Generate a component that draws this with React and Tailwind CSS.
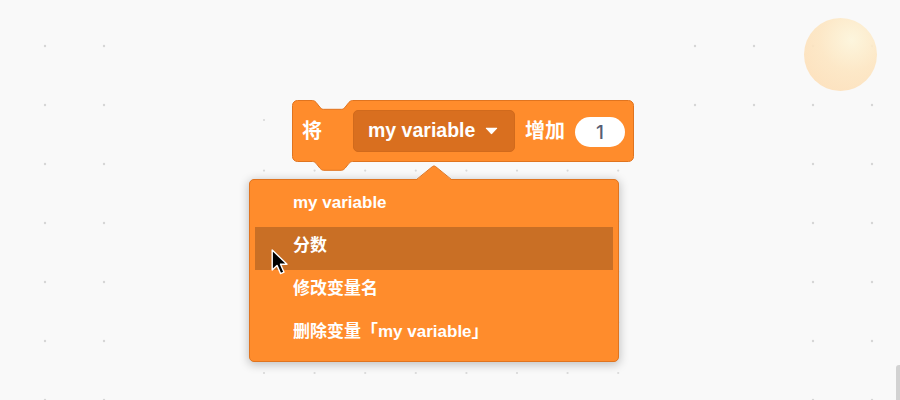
import React from 'react';

const FONT = "font-['Liberation_Sans','Noto_Sans_CJK_SC',sans-serif]";

// dot grids of the workspace
const bigCols = [45, 104, 695, 754, 813, 872];
const bigRows = [46, 105, 164, 223, 282, 341, 400];
const fineCols = [264, 314.6, 365.2, 415.8, 466.4, 517, 567.6, 618.2];
const fineRows = [120, 170.6, 221.2, 271.8, 322.4, 373];

const Grid = () => {
  const dots = [];
  bigCols.forEach((x) =>
    bigRows.forEach((y) => {
      if ((x === 695 || x === 754) && y > 105) return;
      dots.push(<circle key={`b${x}-${y}`} cx={x} cy={y} r="1.2" fill="#d6d6d6" />);
    })
  );
  fineCols.forEach((x) =>
    fineRows.forEach((y) => {
      dots.push(<circle key={`f${x}-${y}`} cx={x} cy={y} r="1.1" fill="#d9d9d9" />);
    })
  );
  return (
    <svg className="absolute inset-0" width="900" height="400">
      {dots}
    </svg>
  );
};

const notch = 'c1.5,0 2.5,0.8 3.5,1.8 l4,5 c1,1 2,2 3.5,2 h18 c1.5,0 2.5,-1 3.5,-2 l4,-5 c1,-1 2,-1.8 3.5,-1.8';
const tab = 'c-1.5,0 -2.5,0.8 -3.5,1.8 l-4,5 c-1,1 -2,2 -3.5,2 h-18 c-1.5,0 -2.5,-1 -3.5,-2 l-4,-5 c-1,-1 -2,-1.8 -3.5,-1.8';

const Block = () => (
  <div className="absolute left-[292px] top-[100px] w-[343px] h-[62px]">
    <svg className="absolute left-0 top-0" width="344" height="74">
      <path
        d={`M0.5,5.5 a5,5 0 0 1 5,-5 H20.5 ${notch} H336.5 a5,5 0 0 1 5,5 V56.5 a5,5 0 0 1 -5,5 H60.5 ${tab} H5.5 a5,5 0 0 1 -5,-5 Z`}
        fill="#FF8C2C"
        stroke="#E0741F"
        strokeWidth="1"
      />
    </svg>
    <div className={`relative flex items-center h-[62px] pl-[10px] text-white font-bold ${FONT}`}>
      <span className="text-[20px] leading-none w-[20px]">将</span>
      <div className="ml-[31px] w-[162px] h-[42px] rounded-[5px] bg-[#D96F1F] border border-[#D16A1C] flex items-center pl-[14px]">
        <span className="text-[19.5px] leading-none">my variable</span>
        <svg className="ml-[10px]" width="13" height="8" viewBox="0 0 13 8">
          <path d="M1.2,0.8 H11.8 Q12.6,0.8 12.1,1.5 L7.2,6.8 Q6.5,7.5 5.8,6.8 L0.9,1.5 Q0.4,0.8 1.2,0.8 Z" fill="#fff" />
        </svg>
      </div>
      <span className="ml-[10px] text-[20px] leading-none">增加</span>
      <div className="ml-[10px] w-[50px] h-[30px] mt-[2px] rounded-full bg-white flex items-center justify-center">
        <span className="text-[19px] font-medium font-['Inter',sans-serif] text-[#575E75] leading-none">1</span>
      </div>
    </div>
  </div>
);

const items = ['my variable', '分数', '修改变量名', '删除变量「my variable」'];

const Menu = () => (
  <div className="absolute left-[249px] top-[179px] w-[370px] h-[183px]">
    <div className="absolute inset-0 rounded-[5px] bg-[#FF8C2C] border border-[#E0741F] shadow-[0_2px_10px_1px_rgba(0,0,0,0.22)]" />
    <svg className="absolute left-[167px] top-[-14px]" width="36" height="16">
      <path d="M0.5,15 L16.5,1.5 Q18,0.3 19.5,1.5 L35.5,15 Z" fill="#FF8C2C" />
      <path d="M0.5,14.5 L16.5,1.5 Q18,0.3 19.5,1.5 L35.5,14.5" fill="none" stroke="#E0741F" strokeWidth="1" />
    </svg>
    <div className={`relative flex flex-col pt-[5px] px-[6px] text-white font-bold text-[17px] ${FONT}`}>
      {items.map((t, i) => (
        <div
          key={t}
          className={`h-[43px] flex items-center pl-[38px] pb-[6px] ${i === 1 ? 'bg-[#C96F25]' : ''}`}
        >
          <span className="leading-none whitespace-nowrap">{t}</span>
        </div>
      ))}
    </div>
  </div>
);

const Cursor = () => (
  <svg className="absolute left-[271px] top-[249px]" width="18" height="28" viewBox="0 0 18 28">
    <path
      d="M1.2,1 L1.2,21 L6,16.4 L9.6,24.6 L13,23.2 L9.5,15.2 L16,15.2 Z"
      fill="#000"
      stroke="#fff"
      strokeWidth="1.4"
      strokeLinejoin="round"
    />
  </svg>
);

export default function App() {
  return (
    <div className="relative w-[900px] h-[400px] overflow-hidden bg-[#f9f9f9]">
      <Grid />
      <div className="absolute left-[804px] top-[18px] w-[73px] h-[73px] rounded-full opacity-90 bg-[radial-gradient(circle_at_65%_30%,#fdf5da_0%,#fde6c2_45%,#fddcb4_100%)]" />
      <Block />
      <Menu />
      <Cursor />
      <div className="absolute left-[896px] top-[365px] w-[4px] h-[40px] rounded-tl-[3px] bg-[#d2d2d2]" />
    </div>
  );
}
